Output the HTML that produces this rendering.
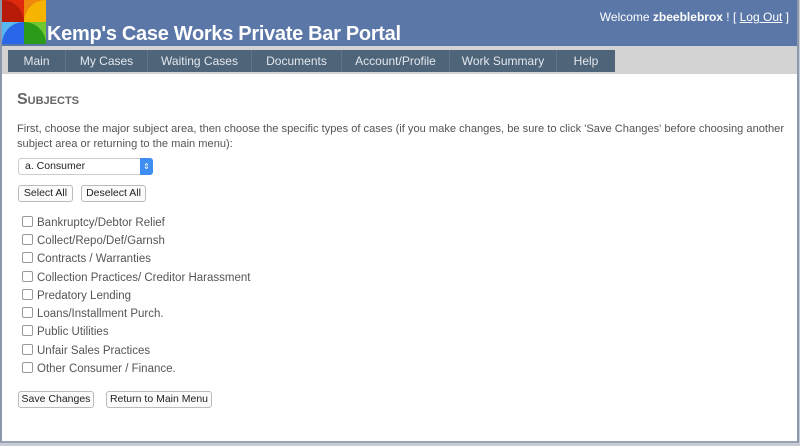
<!DOCTYPE html>
<html><head><style>
body{margin:0;width:800px;height:446px;background:#c8ccd4;font-family:"Liberation Sans",sans-serif;overflow:hidden;position:relative}
#f{position:absolute;left:0;top:0;width:795px;height:441px;background:#fff;border-left:2px solid #8d97ab;border-right:2px solid #8d97ab;border-bottom:2px solid #9aa2b4}
#hd{position:absolute;left:0;top:0;width:795px;height:46px;background:#5a77a8}
#logo{position:absolute;left:0;top:0;width:44px;height:44px}
#title{position:absolute;left:45px;top:23px;color:#fff;font-weight:bold;font-size:20px;letter-spacing:-0.3px}
#wel{position:absolute;right:8px;top:10px;color:#fff;font-size:12px}
#wel a{color:#fff}
#nb{position:absolute;left:0;top:46px;width:795px;height:28px;background:#d3d3d3}
#tabs{position:absolute;left:6px;top:4px;height:22px;display:flex;background:#4e6479}
#tabs div{color:#e4e8ee;font-size:12px;line-height:22px;text-align:center;border-right:1px solid #5f7488}
h2{position:absolute;left:15px;top:91px;margin:0;font-size:16px;color:#666;font-variant:small-caps;font-weight:bold}
.t{position:absolute;left:15px;font-size:11.1px;color:#555}
.btn{position:absolute;height:15px;border:1px solid #bbb;border-radius:3px;background:#fbfbfb;font-size:10.5px;line-height:15px;text-align:center;color:#222}
.cb{position:absolute;left:20px;font-size:11.5px;color:#555}
.cb i{display:inline-block;width:9px;height:9px;border:1px solid #999;border-radius:2px;margin-right:4px;vertical-align:-1px}
</style></head><body>
<div id="f">
<div id="hd">
<svg id="logo" viewBox="0 0 44 44"><path d="M0 0H22V22H0Z" fill="#e02a10"/><path d="M22 0H44V22H22Z" fill="#f5b400"/><path d="M0 22H22V44H0Z" fill="#2a66e8"/><path d="M22 22H44V44H22Z" fill="#2a9a18"/><path d="M22 22A22 22 0 0 0 0 0V22Z" fill="#b81a08"/><path d="M22 22A22 22 0 0 1 44 0H22Z" fill="#ee7a10" opacity=".8"/><path d="M22 22A22 22 0 0 0 0 44V22Z" fill="#5ab8f0"/><path d="M22 22A22 22 0 0 1 44 44V22Z" fill="#70c830"/></svg>
<div id="title">Kemp's Case Works Private Bar Portal</div>
<div id="wel">Welcome <b>zbeeblebrox</b> ! [ <a href="#">Log Out</a> ]</div>
</div>
<div id="nb"><div id="tabs">
<div style="width:57px">Main</div><div style="width:81px">My Cases</div><div style="width:103px">Waiting Cases</div><div style="width:89px">Documents</div><div style="width:107px">Account/Profile</div><div style="width:106px">Work Summary</div><div style="width:58px;border:0">Help</div>
</div></div>
<h2>Subjects</h2>
<div class="t" style="top:122px;width:785px;line-height:15px">First, choose the major subject area, then choose the specific types of cases (if you make changes, be sure to click 'Save Changes' before choosing another subject area or returning to the main menu):</div>
<div class="btn" style="left:16px;top:158px;width:133px;text-align:left;background:#fff;border-color:#ccc"><span style="padding-left:6px">a. Consumer</span><span style="position:absolute;right:-1px;top:-1px;width:13px;height:17px;background:#3d8ef0;border-radius:0 3px 3px 0;color:#fff;font-size:8px;line-height:17px;text-align:center">⇕</span></div>
<div class="btn" style="left:16px;top:185px;width:53px">Select All</div>
<div class="btn" style="left:79px;top:185px;width:63px">Deselect All</div>
<div class="cb" style="top:216px"><i></i>Bankruptcy/Debtor Relief</div>
<div class="cb" style="top:234px"><i></i>Collect/Repo/Def/Garnsh</div>
<div class="cb" style="top:252px"><i></i>Contracts / Warranties</div>
<div class="cb" style="top:271px"><i></i>Collection Practices/ Creditor Harassment</div>
<div class="cb" style="top:289px"><i></i>Predatory Lending</div>
<div class="cb" style="top:307px"><i></i>Loans/Installment Purch.</div>
<div class="cb" style="top:325px"><i></i>Public Utilities</div>
<div class="cb" style="top:344px"><i></i>Unfair Sales Practices</div>
<div class="cb" style="top:362px"><i></i>Other Consumer / Finance.</div>
<div class="btn" style="left:16px;top:391px;width:74px">Save Changes</div>
<div class="btn" style="left:104px;top:391px;width:104px">Return to Main Menu</div>
</div>
</body></html>
